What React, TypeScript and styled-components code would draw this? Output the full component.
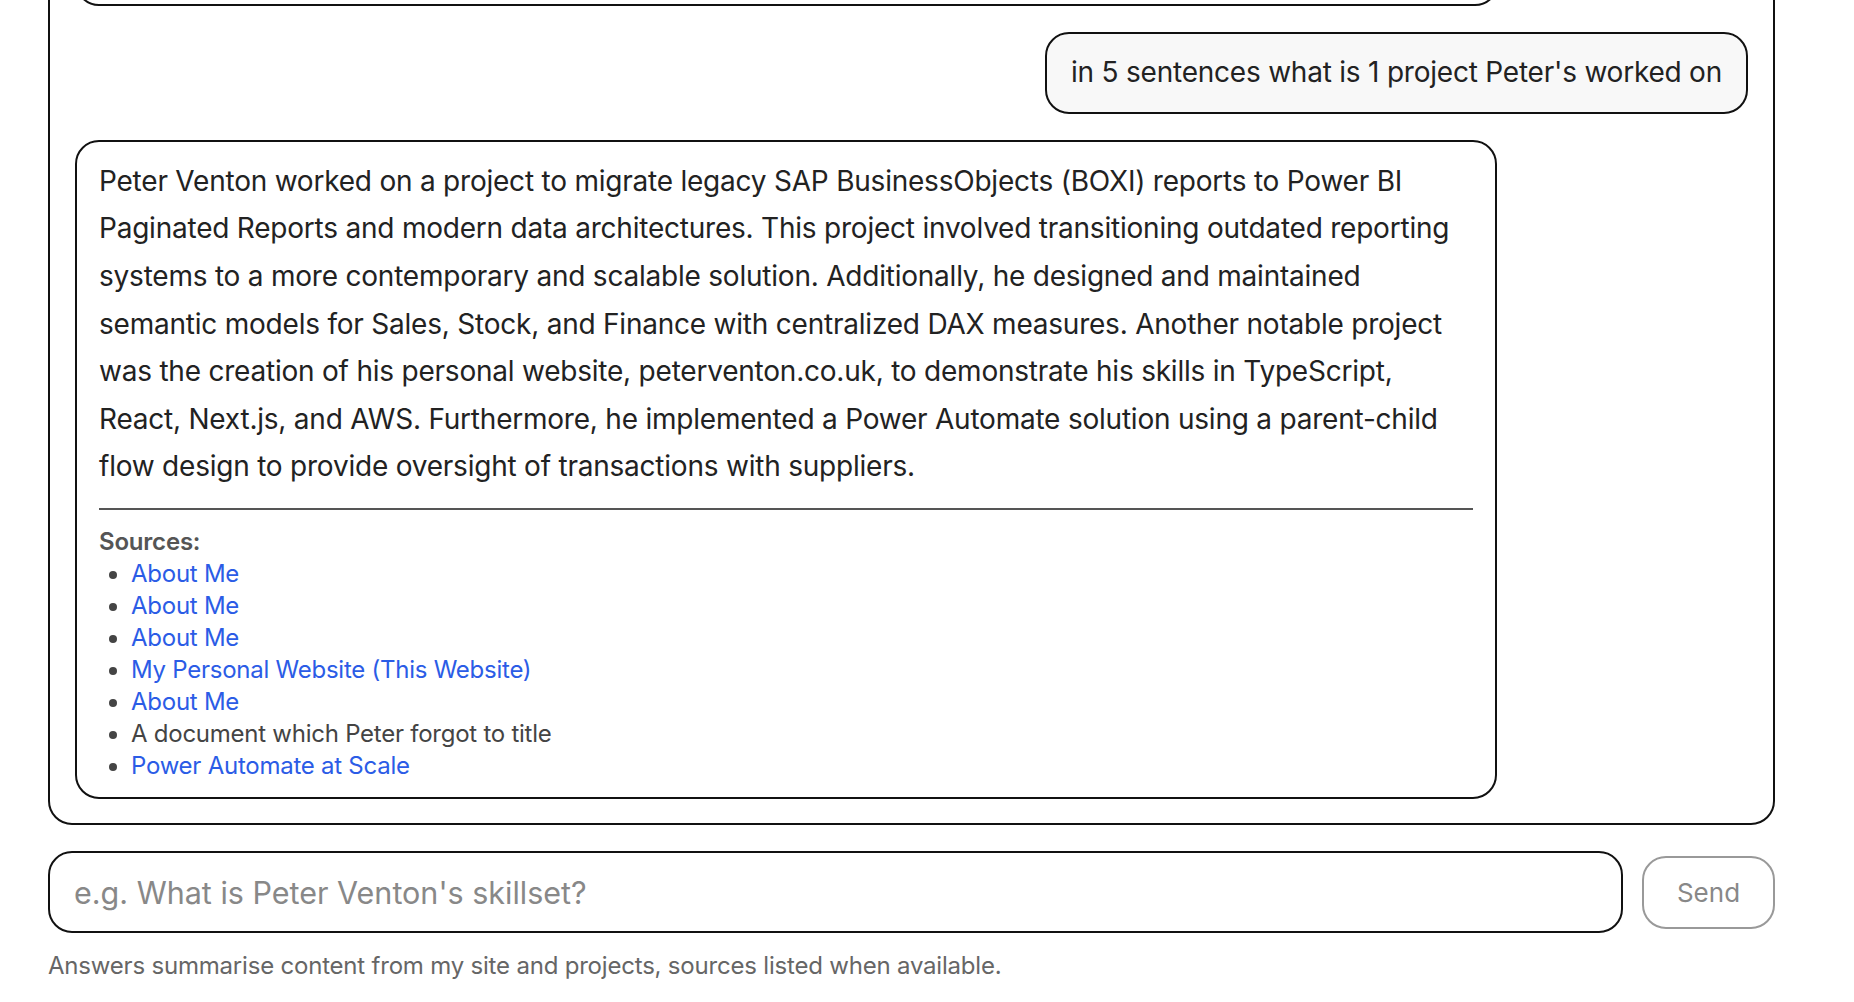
import React from "react";
import styled, { createGlobalStyle } from "styled-components";

const GlobalStyle = createGlobalStyle`
  html, body {
    margin: 0;
    padding: 0;
    background: #ffffff;
    font-family: Inter, "Liberation Sans", sans-serif;
    color: #222;
  }
  * { box-sizing: border-box; }
`;

const Page = styled.div`
  height: 100vh;
  overflow: hidden;
  display: flex;
  flex-direction: column;
  justify-content: flex-end;
  padding: 0 79px 18px 48px;
`;

const ChatPanel = styled.div`
  display: flex;
  flex-direction: column;
  gap: 26px;
  border: 2px solid #111;
  border-radius: 24px;
  padding: 24px 25px;
`;

const Bubble = styled.div<{ $user?: boolean; $width?: string }>`
  border: 2px solid #111;
  border-radius: 24px;
  font-size: 28px;
  line-height: 1.7;
  letter-spacing: -0.22px;
  color: #222;
  align-self: ${(p) => (p.$user ? "flex-end" : "flex-start")};
  background: ${(p) => (p.$user ? "#f8f8f8" : "#ffffff")};
  padding: ${(p) => (p.$user ? "15px 24px" : "16px 22px 15px")};
  width: ${(p) => p.$width ?? "auto"};
`;

// earlier message, scrolled out of view above the panel
const HiddenBubble = styled(Bubble)`
  min-height: 600px;
`;

const Divider = styled.hr`
  border: none;
  border-top: 2px solid #555;
  margin: 17px 0 16px;
`;

const SourcesLabel = styled.div`
  font-size: 24px;
  line-height: 32px;
  font-weight: 600;
  letter-spacing: -0.2px;
  color: #555;
`;

const SourceList = styled.ul`
  margin: 0;
  padding-left: 32px;
  font-size: 24px;
  line-height: 32px;
  letter-spacing: -0.25px;
  color: #555;
`;

const SourceItem = styled.li`
  color: #444;
`;

const SourceLink = styled.a`
  color: #2b5ce6;
  text-decoration: none;
`;

const InputRow = styled.div`
  display: flex;
  align-items: center;
  gap: 19px;
  margin-top: 26px;
`;

const Input = styled.input`
  flex: 1;
  height: 82px;
  border: 2px solid #111;
  border-radius: 24px;
  padding: 0 24px;
  font-family: inherit;
  font-size: 30.5px;
  color: #222;
  outline: none;
  &::placeholder {
    color: #888;
  }
`;

const SendButton = styled.button`
  width: 133px;
  height: 73px;
  border: 2px solid #999;
  border-radius: 24px;
  background: #fff;
  font-family: inherit;
  font-size: 26px;
  color: #888;
`;

const Caption = styled.p`
  margin: 15px 0 0;
  font-size: 24px;
  line-height: 36px;
  letter-spacing: -0.2px;
  color: #666;
`;

const answerLines = [
  "Peter Venton worked on a project to migrate legacy SAP BusinessObjects (BOXI) reports to Power BI",
  "Paginated Reports and modern data architectures. This project involved transitioning outdated reporting",
  "systems to a more contemporary and scalable solution. Additionally, he designed and maintained",
  "semantic models for Sales, Stock, and Finance with centralized DAX measures. Another notable project",
  "was the creation of his personal website, peterventon.co.uk, to demonstrate his skills in TypeScript,",
  "React, Next.js, and AWS. Furthermore, he implemented a Power Automate solution using a parent-child",
  "flow design to provide oversight of transactions with suppliers.",
];

const sources: { title: string; link: boolean }[] = [
  { title: "About Me", link: true },
  { title: "About Me", link: true },
  { title: "About Me", link: true },
  { title: "My Personal Website (This Website)", link: true },
  { title: "About Me", link: true },
  { title: "A document which Peter forgot to title", link: false },
  { title: "Power Automate at Scale", link: true },
];

export default function App() {
  return (
    <>
      <GlobalStyle />
      <Page>
        <ChatPanel>
          <HiddenBubble $width="1424px" />
          <Bubble $user>in 5 sentences what is 1 project Peter's worked on</Bubble>
          <Bubble $width="85%">
            {answerLines.map((line, i) => (
              <React.Fragment key={i}>
                {line}
                {i < answerLines.length - 1 && <br />}
              </React.Fragment>
            ))}
            <Divider />
            <SourcesLabel>Sources:</SourcesLabel>
            <SourceList>
              {sources.map((s, i) => (
                <SourceItem key={i}>
                  {s.link ? <SourceLink href="#">{s.title}</SourceLink> : s.title}
                </SourceItem>
              ))}
            </SourceList>
          </Bubble>
        </ChatPanel>
        <InputRow>
          <Input placeholder="e.g. What is Peter Venton's skillset?" />
          <SendButton>Send</SendButton>
        </InputRow>
        <Caption>Answers summarise content from my site and projects, sources listed when available.</Caption>
      </Page>
    </>
  );
}
